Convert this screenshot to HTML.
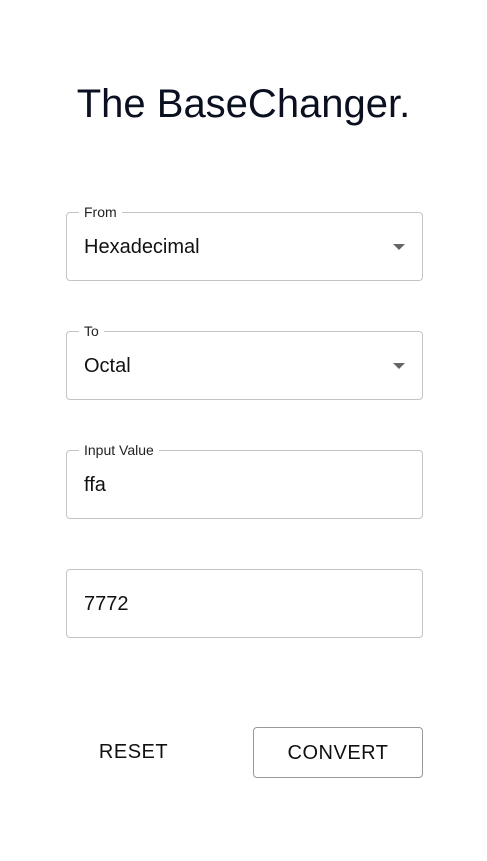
<html><head><style>
body{margin:0;width:487px;height:861px;background:#fff;font-family:"Liberation Sans",sans-serif;color:#111;position:relative}
h1{position:absolute;top:82px;left:0;width:487px;text-align:center;margin:0;font-weight:400;font-size:40px;color:#0a1020}
.f{position:absolute;left:66px;width:355px;height:67px;border:1px solid #c4c4c4;border-radius:4px}
.l{position:absolute;top:-9px;left:12px;background:#fff;padding:0 5px;font-size:14px;color:#222}
.v{position:absolute;left:17px;top:23px;font-size:20px}
.a{position:absolute;right:17px;top:31px;width:0;height:0;border-left:6px solid transparent;border-right:6px solid transparent;border-top:6px solid #666}
.b{position:absolute;top:727px;height:49px;line-height:51px;text-align:center;font-size:20px;letter-spacing:.5px}
</style></head><body>
<h1>The BaseChanger.</h1>
<div class="f" style="top:212px"><span class="l">From</span><span class="v">Hexadecimal</span><span class="a"></span></div>
<div class="f" style="top:331px"><span class="l">To</span><span class="v">Octal</span><span class="a"></span></div>
<div class="f" style="top:450px"><span class="l">Input Value</span><span class="v">ffa</span></div>
<div class="f" style="top:569px"><span class="v">7772</span></div>
<div class="b" style="left:66px;width:135px">RESET</div>
<div class="b" style="left:253px;width:168px;border:1px solid #999;border-radius:4px">CONVERT</div>
</body></html>
